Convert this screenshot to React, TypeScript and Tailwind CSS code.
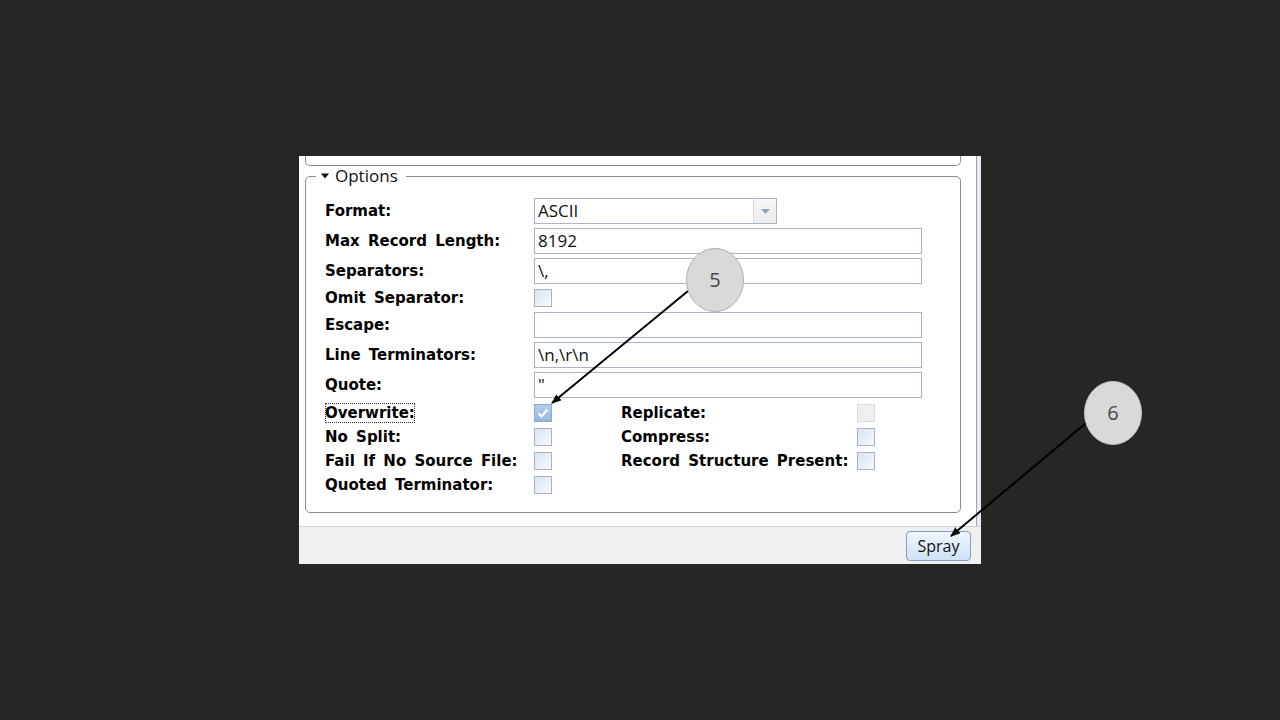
import React from "react";

const labelCls =
  "font-['DejaVu_Sans',sans-serif] font-bold text-[15px] text-black [word-spacing:3px] leading-[20px] whitespace-nowrap";
const valueCls = "font-['Open_Sans',sans-serif] text-[17px] text-[#111]";

const TextBox = ({ value = "" }: { value?: string }) => (
  <div
    className={`h-[26px] w-[388px] border border-[#aab4c6] bg-white px-[3px] flex items-center ${valueCls}`}
  >
    {value}
  </div>
);

const CheckBox = ({
  checked = false,
  disabled = false,
}: {
  checked?: boolean;
  disabled?: boolean;
}) => {
  if (disabled)
    return <div className="w-[18px] h-[18px] border border-[#dadada] bg-[#efefef]" />;
  if (checked)
    return (
      <div className="w-[18px] h-[18px] border border-[#8fa8c4] bg-gradient-to-b from-[#b4cfea] to-[#93b8e0] flex items-center justify-center">
        <svg width="12" height="10" viewBox="0 0 12 10">
          <path d="M1.5 5.5 L4.5 8.5 L10.5 1.5" fill="none" stroke="#ffffff" strokeWidth="2" />
        </svg>
      </div>
    );
  return (
    <div className="w-[18px] h-[18px] border border-[#aab2c0] bg-gradient-to-br from-[#d7e4f1] to-[#f7fafd]" />
  );
};

const FieldRow = ({ label, children }: { label: string; children: React.ReactNode }) => (
  <div className="flex items-center">
    <div className={`w-[209px] ${labelCls}`}>{label}</div>
    {children}
  </div>
);

const CheckRow = ({
  label,
  checked,
  focused,
  right,
}: {
  label: string;
  checked?: boolean;
  focused?: boolean;
  right?: { label: string; disabled?: boolean };
}) => (
  <div className="flex items-center h-[24px]">
    <div className="w-[209px] flex">
      <span
        className={`${labelCls} ${
          focused ? "outline outline-1 outline-dotted outline-[#333] -outline-offset-1" : ""
        }`}
      >
        {label}
      </span>
    </div>
    <CheckBox checked={checked} />
    {right && (
      <>
        <div className={`ml-[69px] w-[236px] ${labelCls}`}>{right.label}</div>
        <CheckBox disabled={right.disabled} />
      </>
    )}
  </div>
);

export default function App() {
  return (
    <div className="relative w-[1280px] h-[720px] bg-[#262626] overflow-hidden pt-[156px] pl-[299px]">
      <div className="w-[682px] h-[408px] flex flex-col bg-white">
        <div className="flex-1 flex">
          <div className="w-[678px] border-r border-[#8ea6c6] bg-white flex flex-col">
            <div className="ml-[6px] w-[656px] h-[10px] border-x border-b border-[#8c8c8c] rounded-b-[5px]" />
            <fieldset className="ml-[6px] w-[656px] border border-[#8c8c8c] rounded-[5px] pl-[19px] pr-[10px] pt-[12px] pb-[15px]">
              <legend className="-ml-[9px] pl-[5px] pr-[8px] h-[20px] flex items-center gap-[6px]">
                <svg width="8" height="6" viewBox="0 0 8 6">
                  <polygon points="0,0.5 8,0.5 4,5.5" fill="#111" />
                </svg>
                <span className={`${valueCls} leading-[20px]`}>Options</span>
              </legend>
              <div className="flex flex-col gap-[4px]">
                <FieldRow label="Format:">
                  <div
                    className={`h-[26px] w-[243px] border border-[#aab4c6] flex ${valueCls}`}
                  >
                    <div className="flex-1 px-[3px] flex items-center">ASCII</div>
                    <div className="w-[23px] border-l border-[#d4d9e1] bg-gradient-to-b from-[#f7f7f7] to-[#ececec] flex items-center justify-center">
                      <svg width="9" height="5" viewBox="0 0 9 5">
                        <polygon points="0,0 9,0 4.5,5" fill="#8ea3bb" />
                      </svg>
                    </div>
                  </div>
                </FieldRow>
                <FieldRow label="Max Record Length:">
                  <TextBox value="8192" />
                </FieldRow>
                <FieldRow label="Separators:">
                  <TextBox value="\," />
                </FieldRow>
                <div className="flex items-center h-[20px]">
                  <div className={`w-[209px] ${labelCls}`}>Omit Separator:</div>
                  <CheckBox />
                </div>
                <FieldRow label="Escape:">
                  <TextBox />
                </FieldRow>
                <FieldRow label="Line Terminators:">
                  <TextBox value="\n,\r\n" />
                </FieldRow>
                <FieldRow label="Quote:">
                  <TextBox value={'"'} />
                </FieldRow>
              </div>
              <div className="flex flex-col mt-[3px]">
                <CheckRow
                  label="Overwrite:"
                  checked
                  focused
                  right={{ label: "Replicate:", disabled: true }}
                />
                <CheckRow label="No Split:" right={{ label: "Compress:" }} />
                <CheckRow
                  label="Fail If No Source File:"
                  right={{ label: "Record Structure Present:" }}
                />
                <CheckRow label="Quoted Terminator:" />
              </div>
            </fieldset>
          </div>
          <div className="flex-1 bg-[#ececec]" />
        </div>
        <div className="h-[38px] bg-[#efefef] border-t border-[#d2d2d2] flex justify-end items-start pt-[4px] pr-[10px]">
          <button
            className={`h-[30px] w-[65px] rounded-[4px] border border-[#7f9fc4] bg-gradient-to-b from-[#eef5fd] to-[#cfe2f6] font-['Open_Sans',sans-serif] text-[16px] text-[#111]`}
          >
            Spray
          </button>
        </div>
      </div>

      <svg
        className="absolute inset-0 pointer-events-none"
        width="1280"
        height="720"
        viewBox="0 0 1280 720"
      >
        <defs>
          <marker
            id="head"
            markerWidth="10"
            markerHeight="8"
            refX="9"
            refY="4"
            orient="auto"
            markerUnits="userSpaceOnUse"
          >
            <polygon points="0,0 10,4 0,8" fill="#000" />
          </marker>
        </defs>
        <line x1="688" y1="291" x2="552" y2="403" stroke="#000" strokeWidth="2" markerEnd="url(#head)" />
        <line x1="1086" y1="423" x2="951" y2="536" stroke="#000" strokeWidth="2" markerEnd="url(#head)" />
        <ellipse cx="715" cy="280" rx="28.5" ry="31.5" fill="#d9d9d9" stroke="#adadad" strokeWidth="1" />
        <ellipse cx="1113" cy="413" rx="28.5" ry="31.5" fill="#d9d9d9" stroke="#c4c4c4" strokeWidth="1" />
        <text x="715" y="287" textAnchor="middle" fontFamily="'Open Sans', sans-serif" fontSize="20" fill="#474747">
          5
        </text>
        <text x="1113" y="420" textAnchor="middle" fontFamily="'Open Sans', sans-serif" fontSize="20" fill="#474747">
          6
        </text>
      </svg>
    </div>
  );
}
